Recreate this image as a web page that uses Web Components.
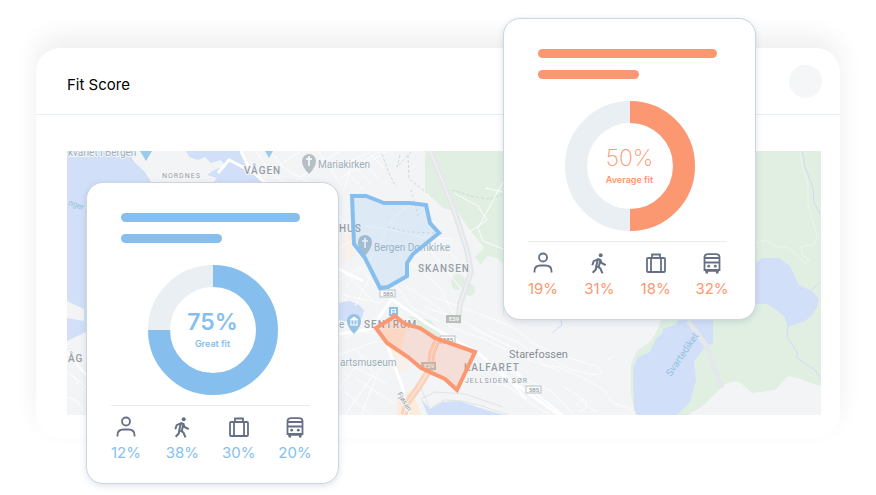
<!DOCTYPE html>
<html lang="en">
<head>
<meta charset="utf-8">
<meta name="viewport" content="width=device-width, initial-scale=1">
<title>Fit Score</title>
<style>
  body { margin: 0; background: #fff; font-family: Inter, "Liberation Sans", sans-serif; color: #14171c; }
</style>
</head>
<body>
<fit-page>
  <fit-panel>
    <span slot="title">Fit Score</span>
    <city-map></city-map>
  </fit-panel>
  <score-card slot="start" tone="blue" score="75" label="Great fit" weight="600" people="12%" walking="38%" work="30%" transit="20%"></score-card>
  <score-card slot="end" tone="orange" score="50" label="Average fit" weight="200" people="19%" walking="31%" work="18%" transit="32%"></score-card>
</fit-page>

<template id="page-template">
  <style>
    :host { display: block; position: relative; box-sizing: border-box; min-height: 495px; padding: 48px 36px 0; overflow: hidden; }
    ::slotted([slot="start"]) { position: absolute; left: 86px; top: 182px; }
    ::slotted([slot="end"]) { position: absolute; right: 120px; top: 18px; }
  </style>
  <main><slot></slot></main>
  <slot name="start"></slot>
  <slot name="end"></slot>
</template>

<template id="panel-template">
  <style>
    :host { display: block; background: #fff; border-radius: 24px; box-shadow: 0 -12px 26px rgba(0, 0, 0, .065); }
    header { display: flex; align-items: center; justify-content: space-between; height: 66px; padding: 0 18px 0 31px; border-bottom: 1px solid #e6eef5; }
    h1 { margin: 0; padding-top: 8px; font-size: 15px; line-height: 20px; font-weight: 400; color: #000; }
    .avatar { width: 33px; height: 33px; border-radius: 50%; background: #f5f6f7; }
    .body { padding: 36px 19px 23px 31px; }
  </style>
  <header><h1><slot name="title"></slot></h1><span class="avatar"></span></header>
  <div class="body"><slot></slot></div>
</template>

<template id="card-template">
  <style>
    :host { --tone: #86bfee; display: block; box-sizing: border-box; width: 253px; padding: 30px 24px 20px; background: #fff; border: 1px solid #cbd6df; border-radius: 17px; box-shadow: 0 2px 6px rgba(90, 115, 145, .2); }
    :host([tone="orange"]) { --tone: #fb9872; }
    .lines { display: grid; gap: 12px; padding-left: 10px; }
    .lines i { display: block; width: 179px; height: 9px; border-radius: 5px; background: var(--tone); }
    .lines i + i { width: 101px; }
    .chart { display: grid; place-items: center; margin: 22px 0 10px; }
    .chart > * { grid-area: 1 / 1; }
    .ring { display: block; width: 130px; height: 130px; }
    .value { display: flex; flex-direction: column; align-items: center; color: var(--tone); }
    .value strong { font-size: 23px; line-height: 28px; }
    .value span { font-size: 9px; line-height: 16px; font-weight: 600; }
    ul { display: flex; justify-content: space-between; list-style: none; margin: 0 4px 0 0; padding: 9px 0 0; border-top: 1px solid #e6ecf0; }
    li { display: flex; flex-direction: column; align-items: center; gap: 4px; width: 30px; color: var(--tone); font-size: 15px; line-height: 20px; }
  </style>
  <div class="lines"><i></i><i></i></div>
  <div class="chart">
    <svg class="ring" viewBox="0 0 130 130" fill="none" stroke-width="22" aria-hidden="true">
      <circle cx="65" cy="65" r="54" stroke="#e9eff3"/>
      <circle class="arc" cx="65" cy="65" r="54" stroke="var(--tone)" pathLength="100" transform="rotate(-90 65 65)"/>
    </svg>
    <div class="value"><strong></strong><span></span></div>
  </div>
  <ul>
    <li><stat-icon name="person"></stat-icon><span data-key="people"></span></li>
    <li><stat-icon name="walk"></stat-icon><span data-key="walking"></span></li>
    <li><stat-icon name="case"></stat-icon><span data-key="work"></span></li>
    <li><stat-icon name="train"></stat-icon><span data-key="transit"></span></li>
  </ul>
</template>

<template id="map-template">
  <style>
    :host { display: block; }
    svg { display: block; width: 100%; height: auto; }
    text { font-family: Roboto, "Liberation Sans", sans-serif; font-size: 10px; fill: #959da5; stroke: #f5f6f8; stroke-width: 2px; paint-order: stroke; stroke-linejoin: round; }
    .caps { letter-spacing: 1px; font-weight: 500; }
    .small { font-size: 7px; font-weight: 400; }
    .place { fill: #9cafba; }
    .water { fill: #95c2df; stroke: #d1dff8; stroke-width: 1px; }
    .town { font-size: 11px; fill: #868d95; }
    .sign { font-size: 6px; stroke: none; text-anchor: middle; font-weight: 500; }
    .sign.light { fill: #fff; }
  </style>
  <svg viewBox="67 151 754 264" role="img" aria-label="Map of Bergen with two highlighted areas">
    <rect x="67" y="151" width="754" height="264" fill="#f3f4f6"/>
    <g fill="#e0efe2">
      <path d="M425 151H821V386L805 381Q793 375 787 377L775 390 752 393 742 384Q732 378 722 387L704 405 688 415H636L631 396V364L637 351 652 340 658 328 663 315H503V264L497 258 487 256 481 265 475 257 484 248 477 239 467 226 458 212 443 208 430 196 425 190Z"/>
      <ellipse cx="458" cy="282" rx="7" ry="8"/><ellipse cx="470" cy="290" rx="5" ry="6"/>
      <path d="M408 316 430 320 441 333 436 339 417 329Z"/>
    </g>
    <path d="M504 264V315H663L672 264Z" fill="#f3f4f6"/>
    <g fill="#d1dff8">
      <path d="M67 151H128L134 162 144 171 152 183V300H86V332L67 341V318L84 321V309L67 301Z"/>
      <path d="M186 151H243L248 166 264 183H213L217 178 207 175 214 170 225 166 221 160 211 163 205 157 198 160 189 157Z"/>
      <path d="M338 303 350 301 359 305 364 310 362 318 350 322 338 320Z"/>
      <path d="M421 399 430 409 443 402 460 401 480 408 504 415H428Z"/>
      <path d="M680 318H713V343L704 348 694 361 696 380 690 402 677 415H637L634 409 633 368 638 357 650 352 656 339 662 334 663 329 675 325Z"/>
      <path d="M750 268 762 258H779L790 266 799 285 812 291 819 299 817 307 812 315 804 322 796 324 788 327 784 316 776 310 767 304H750Z"/>
    </g>
    <g fill="#fdebdc">
      <path d="M342 232 351 230 355 255 343 262Z" opacity=".5"/>
      <path d="M382 326 395 318 407 326 401 350 386 343Z"/>
      <path d="M390 348 406 356 408 370 395 373Z" opacity=".5"/>
      <path d="M398 398 412 390 421 415H397Z"/>
    </g>
    <g fill="none" stroke="#fdfdfe" stroke-width="1">
      <path d="M256 151 270 172 285 183M270 151 286 170 310 183M296 180 340 151M280 165 300 151M318 151 340 183M340 178 388 151M344 164 372 151M344 189 350 170 380 151M346 171 364 190M353 164 371 184M361 159 378 178M370 154 384 168"/>
      <path d="M339 215 356 238M339 248 355 239M339 280 360 268 375 285M339 266 372 300M342 295 380 303M345 288 369 261M355 306 372 273M365 326 391 303M339 325 378 335M342 339 373 325M339 355 377 341M345 415 374 374 356 349M348 364 386 383M354 377 395 404M344 391 371 415M364 355 339 389M379 370 361 415"/>
      <path d="M370 260 394 217 412 203M365 226 392 230 420 237 452 239M397 286 412 308 439 321M406 286 439 308 459 325M411 263 440 287 454 315M426 245 450 275 470 300M437 236 454 257 471 283"/>
      <path d="M431 296 466 309 503 323M425 307 461 320 517 351M448 326 486 340 519 356 559 371M468 327 508 345 533 357M480 314 511 326 536 345 560 355 598 367 603 373 595 375 571 370 545 355 530 348M492 363 527 380 551 391 573 414M479 380 507 386 535 406 549 414M487 330 518 342 545 365 558 367 583 378 603 389 613 403 629 408 635 415M605 361 614 356M562 386 579 396 585 404 597 413M577 407Q577 398 586 400 588 409 579 412"/>
      <path d="M71 374 86 393M67 371 86 387M67 397 77 401 86 414M503 182 478 228 483 241 503 249M454 193 478 206 487 220 469 232M485 188 503 192"/>
      <path d="M755 244 765 240 779 247 788 247 800 258 806 264 809 259 802 255 801 247 815 244 817 235 808 205 808 185 802 165 800 151" stroke="#edf3ef"/>
    </g>
    <g fill="none" stroke="#fff" stroke-width="3">
      <path d="M241 151 249 168 266 184M218 173 229 160 260 176M339 269 363 281M339 334 371 329 393 297M393 300 426 323 451 338 477 352 503 375 552 410 560 415M387 344 395 367 402 386 408 415"/>
      <path d="M67 352 86 375" stroke-width="2"/>
      <path d="M515 370 534 392 563 415M500 369 526 399" stroke-width="2"/>
    </g>
    <g fill="none">
      <path d="M430 151 443 182 456 216 467 250 471 272 460 304 458 324" stroke="#e5e8ea" stroke-width="6"/>
      <path d="M430 151 443 182 456 216 467 250 471 272 460 304 458 324" stroke="#f4f5f7" stroke-width="1"/>
      <path d="M438 338 432 353 430 369 418 388 407 403 404 415" stroke="#fad3bd" stroke-width="7"/>
      <path d="M438 338 432 353 430 369 418 388 407 403 404 415" stroke="#fff1e9" stroke-width="1"/>
      <path d="M421 388 430 409 444 400 462 401 482 406 508 415M421 399 435 392 465 394 503 407" stroke="#dfe5e3" stroke-width="1"/>
      <path d="M452 190 475 197 490 199 503 194M382 154 389 173 396 187M400 155 397 167 412 151M408 155 409 179 427 193" stroke="#cbdcd2" stroke-width="1" stroke-dasharray="3 2"/>
      <path d="M411 190 419 218M388 227 409 232 436 233" stroke="#ccd9d9" stroke-width="1" stroke-dasharray="2 3"/>
      <path d="M130 158 144 174 150 183" stroke="#cfe2dd"/>
      <path d="M688 321 706 345 722 388" stroke="#e4e8eb" stroke-width="5"/>
      <path d="M788 326 787 337 797 352 797 358 815 370 821 379M802 151 805 167 813 188 814 202 820 214M561 320 562 325 552 333M812 290 821 281" stroke="#cbdcf5"/>
    </g>
    <path d="M140 151H152L146 161ZM265 151H273L269 158Z" fill="#9bcbec"/>
    <g>
      <path d="M309 174Q302 167 302 161A7 7 0 0 1 316 161Q316 167 309 174Z" fill="#b5bfc6"/>
      <path d="M309 156V166M306 159H312" stroke="#fff" stroke-width="1.5"/>
    </g>
    <text class="place" x="68" y="156">kvariet i Bergen</text>
    <text class="caps small" x="162" y="178">NORDNES</text>
    <text class="caps" x="244" y="174">VÅGEN</text>
    <text class="place" x="318" y="168">Mariakirken</text>
    <text class="water" transform="translate(68 205) rotate(18)" style="font-size:8px">nger</text>
    <text class="caps" x="68" y="362">ÅG</text>
    <text class="caps" x="339" y="232">HUS</text>
    <text class="caps" x="418" y="272">SKANSEN</text>
    <text class="caps" x="364" y="328">SENTRUM</text>
    <text class="caps" x="464" y="371">KALFARET</text>
    <text class="caps small" x="465" y="383">JELLSIDEN SØR</text>
    <text class="town" x="509" y="358">Starefossen</text>
    <text class="place" x="339" y="328">e</text>
    <text class="place" x="340" y="366">artsmuseum</text>
    <text class="water" transform="translate(671 377) rotate(-56)">Svartediket</text>
    <text class="small" transform="translate(397 394) rotate(58)">Fjøsan</text>
    <text class="place" x="374" y="251">Bergen Domkirke</text>
    <g>
      <path d="M365 256Q357 248 358 242A7 7 0 0 1 372 242Q372 248 365 256Z" fill="#a9bbc8"/>
      <path d="M365 238V248M362 241H368" stroke="#fff" stroke-width="1.5"/>
      <path d="M354 334Q347 327 347 321A7 7 0 0 1 361 321Q361 327 354 334Z" fill="#94c3e4"/>
      <path d="M350 320 354 317 358 320ZM350 325H358M351 321V325M354 321V325M357 321V325" stroke="#fff" fill="#fff"/>
      <rect x="389" y="307" width="9" height="9" rx="1" fill="#8ebfe7"/>
      <path d="M391.500 314V309.500H395.500V313M392 312H395" stroke="#fff" fill="none"/>
    </g>
    <g fill="#fafbfb" stroke="#bac1c5">
      <rect x="380" y="290" width="15" height="7"/><rect x="440" y="336" width="15" height="7"/><rect x="526" y="386" width="15" height="7"/>
    </g>
    <g fill="#b7beb6"><rect x="446" y="315" width="15" height="8"/><rect x="421" y="362" width="15" height="8"/></g>
    <text class="sign" x="388" y="296">585</text><text class="sign" x="448" y="342">585</text><text class="sign" x="534" y="392">585</text>
    <text class="sign light" x="454" y="321">E39</text><text class="sign light" x="429" y="368">E39</text>
    <path d="M352 196H366L384 203H410L426 205 430 223 439 233 413 254 407 263V276L388 287 380 288 365 258 354 244Z" fill="#86bfee" fill-opacity=".2" stroke="#86bfee" stroke-width="4"/>
    <path d="M395 316 405 324 420 328 435 338 455 345 475 352 457 390 445 379 421 368 408 357 387 343 376 328Z" fill="#fb9872" fill-opacity=".23" stroke="#fb9872" stroke-width="4"/>
  </svg>
</template>

<script>
  const attach = (host, id) => host.attachShadow({ mode: 'open' }).append(document.getElementById(id).content.cloneNode(true));

  class FitPage extends HTMLElement { constructor() { super(); attach(this, 'page-template'); } }
  class FitPanel extends HTMLElement { constructor() { super(); attach(this, 'panel-template'); } }
  class CityMap extends HTMLElement { constructor() { super(); attach(this, 'map-template'); } }

  const icons = {
    person: '<circle cx="12" cy="6.500" r="4"/><path d="M3.500 21.500V20Q3.500 14.500 9.500 14.500H14.500Q20.500 14.500 20.500 20V21.500"/>',
    walk: '<circle cx="13.700" cy="4.300" r="2" fill="currentColor" stroke="none"/><path d="M5.300 14.300 6.700 10.200 11.300 8.200 13.500 9 14.500 12 18.700 14.200M10.800 8.500 9.300 15 13.400 17.500 15.500 22.300M13.300 9.500 11.900 15.500M9.300 15 8.800 18.500 5.700 21.800" stroke-width="2"/>',
    case: '<rect x="3" y="7" width="18" height="14" rx="1"/><path d="M8 7V3.500H16V7M7 7V21M17 7V21"/>',
    train: '<path d="M4.500 19V6Q4.500 3.200 8 3.200H16Q19.500 3.200 19.500 6V19ZM4.500 7H19.500M4.500 11.500H19.500"/><path d="M5 19.500H19M7.500 19 6.500 22.500M16.500 19 17.500 22.500" stroke-width="2.500"/><circle cx="8.700" cy="15.200" r="1.400" fill="currentColor" stroke="none"/><circle cx="15.300" cy="15.200" r="1.400" fill="currentColor" stroke="none"/>'
  };
  class StatIcon extends HTMLElement {
    connectedCallback() {
      if (this.shadowRoot) return;
      this.attachShadow({ mode: 'open' }).innerHTML = `
        <style>:host { display: block; color: #667085; } svg { display: block; width: 24px; height: 24px; }</style>
        <svg viewBox="0 0 24 24" fill="none" stroke="currentColor" stroke-width="1.800" aria-hidden="true">${icons[this.getAttribute('name')]}</svg>`;
    }
  }
  class ScoreCard extends HTMLElement {
    connectedCallback() {
      if (this.shadowRoot) return;
      attach(this, 'card-template');
      const root = this.shadowRoot;
      const score = this.getAttribute('score');
      const value = root.querySelector('strong');
      value.textContent = score + '%';
      value.style.fontWeight = this.getAttribute('weight');
      root.querySelector('.value span').textContent = this.getAttribute('label');
      root.querySelector('.arc').setAttribute('stroke-dasharray', `${score} 100`);
      root.querySelectorAll('[data-key]').forEach(el => { el.textContent = this.getAttribute(el.dataset.key); });
    }
  }
  customElements.define('stat-icon', StatIcon);
  customElements.define('score-card', ScoreCard);
  customElements.define('city-map', CityMap);
  customElements.define('fit-panel', FitPanel);
  customElements.define('fit-page', FitPage);
</script>
</body>
</html>
